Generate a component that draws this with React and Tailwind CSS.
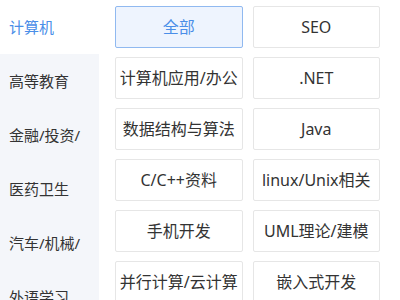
import React, { useState } from "react";

const categories = ["计算机", "高等教育", "金融/投资/", "医药卫生", "汽车/机械/", "外语学习"];

const tags = [
  "全部",
  "SEO",
  "计算机应用/办公",
  ".NET",
  "数据结构与算法",
  "Java",
  "C/C++资料",
  "linux/Unix相关",
  "手机开发",
  "UML理论/建模",
  "并行计算/云计算",
  "嵌入式开发",
];

export default function App() {
  const [activeCat, setActiveCat] = useState(0);
  const [activeTag, setActiveTag] = useState(0);

  return (
    <div
      className="flex h-[300px] w-[400px] overflow-hidden bg-white text-[#333]"
      style={{ fontFamily: '"Noto Sans", "Noto Sans CJK SC", sans-serif' }}
    >
      {/* 左侧分类 */}
      <div className="w-[99px] shrink-0 bg-[#f4f6fa]">
        {categories.map((c, i) => (
          <div
            key={c}
            onClick={() => setActiveCat(i)}
            className={`flex h-[54px] items-center pl-[9px] text-[15px] ${
              i === activeCat ? "bg-white text-[#4a8ee8]" : "text-[#333]"
            }`}
          >
            {c}
          </div>
        ))}
      </div>

      {/* 右侧标签 */}
      <div className="flex-1 pl-[16px] pr-[20px] pt-[6px]">
        <div className="grid grid-cols-2 gap-x-[10px] gap-y-[9px]">
          {tags.map((t, i) => (
            <button
              key={t}
              onClick={() => setActiveTag(i)}
              className={`flex h-[42px] items-center justify-center whitespace-nowrap rounded-[2px] border text-[16px] ${
                i === activeTag
                  ? "border-[#90b9f0] bg-[#eef4fe] text-[#4a8ee8]"
                  : "border-[#e6e6e6] bg-white text-[#333]"
              }`}
            >
              {t}
            </button>
          ))}
        </div>
      </div>
    </div>
  );
}
